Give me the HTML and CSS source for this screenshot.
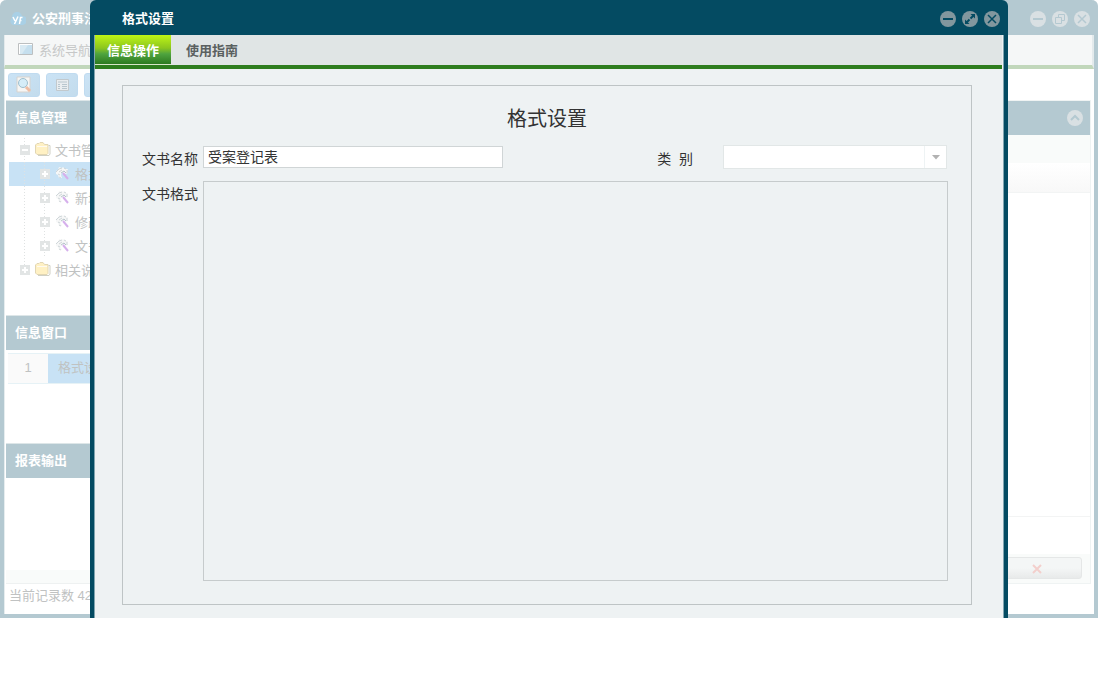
FILE: index.html
```html
<!DOCTYPE html>
<html lang="zh-CN">
<head>
<meta charset="utf-8">
<title>格式设置</title>
<link rel="stylesheet" href="styles.css">
</head>
<body>
<svg class="defs" aria-hidden="true">
  <symbol id="folder" viewBox="0 0 16 14"><path d="M.5 11V3L2 1.500h2L5 .500h3L9.500 2.500H13v9L12 12.500H2z" fill="#fff1c4" stroke="#e2d6b4"/><path d="M2 4.500h10" stroke="#fffaf0"/><path d="M13.500 3.500h1.500v8.500l-1 1.500H3" fill="none" stroke="#cfd0c4"/></symbol>
  <symbol id="tool" viewBox="0 0 16 14"><path d="M1 5l2-1 1-3 3 1 1-1 2 2h3l-1 3 1 1-3 1-3-2-1 3 1 3H4l-1-3-2-1z" fill="#f6f7f7"/><path d="M1 6l3-3 3-1M4 6l3-2M3 8l2 1M4 11l2 1M9 2l2 1M12 4v3" fill="none" stroke="#cfd6d9"/><path d="M6 7l3-2 2 2" fill="none" stroke="#b6c4ca"/><path d="M8 7l5 6" stroke="#d6b0ec" stroke-width="2"/></symbol>
  <symbol id="plus" viewBox="0 0 10 10"><path d="M0 0h10v10H0z" fill="#e2e5e5"/><path d="M5 2v6M2 5h6" stroke="#fff" stroke-width="2"/></symbol>
  <symbol id="minus" viewBox="0 0 10 10"><path d="M0 0h10v10H0z" fill="#e2e5e5"/><path d="M2 5h6" stroke="#fff" stroke-width="2"/></symbol>
</svg>
<div class="stage">
  <div class="app">
    <header class="app-title">
      <svg class="logo" width="16" height="14" viewBox="0 0 16 14"><path d="M3 13a4 4 0 0 1-1-7 5 5 0 0 1 10-2 4 4 0 0 1 1 9z" fill="#a9d0e6"/><path d="M3 5l2 4M8 4.500L4.500 12M9.500 12l1-6.500h2M9.500 8.500h2" stroke="#fff" stroke-width="1.500" fill="none"/></svg>
      <span class="app-name">公安刑事法</span>
      <div class="controls">
        <button aria-label="最小化" class="round"><svg viewBox="0 0 16 16"><path d="M3 8h10" stroke-width="2"/></svg></button>
        <button aria-label="还原" class="round"><svg viewBox="0 0 16 16"><path d="M3.500 6.500h6v6h-6zM6.500 6V3.500h6v6H10"/></svg></button>
        <button aria-label="关闭" class="round"><svg viewBox="0 0 16 16"><path d="M4 4l8 8M12 4l-8 8" stroke-width="1.500"/></svg></button>
      </div>
    </header>
    <nav class="app-nav"><a href="#"><svg width="16" height="13" viewBox="0 0 16 13"><path d="M.5.500h14v11H.5z" fill="#fff" stroke="#bcbfc0"/><path d="M2 2h12v9H2z" fill="#c5dfee"/><path d="M2 2h8L4 11H2z" fill="#d9eaf3"/></svg>系统导航</a></nav>
    <div class="app-main">
      <aside class="side">
        <div class="toolbar">
          <button aria-label="查询"><svg width="20" height="18" viewBox="0 0 20 18"><path d="M3 1h13v15H3z" fill="#f7f6f4" stroke="#d6d3cf"/><circle cx="9" cy="7" r="4.500" fill="#d6edf8" stroke="#9fbfce"/><path d="M12 11l4 4" stroke="#eebda4" stroke-width="3"/></svg></button>
          <button aria-label="列表"><svg width="20" height="18" viewBox="0 0 20 18"><path d="M4.500 3.500h12v11h-12z" fill="#e9edf0" stroke="#c2c9cd"/><path d="M6 6h9M6 8.500h2M6 10.500h2M6 12.500h2M10 8.500h5M10 10.500h5M10 12.500h5" stroke="#b8c6ce"/></svg></button>
          <button aria-label="更多"></button>
        </div>
        <section>
          <h2>信息管理</h2>
          <ul class="tree">
            <li><svg class="box"><use href="#minus"/></svg><svg class="ico"><use href="#folder"/></svg><span>文书管</span></li>
            <li class="sub current"><svg class="box"><use href="#plus"/></svg><svg class="ico"><use href="#tool"/></svg><span>格式</span></li>
            <li class="sub"><svg class="box"><use href="#plus"/></svg><svg class="ico"><use href="#tool"/></svg><span>新增</span></li>
            <li class="sub"><svg class="box"><use href="#plus"/></svg><svg class="ico"><use href="#tool"/></svg><span>修改</span></li>
            <li class="sub"><svg class="box"><use href="#plus"/></svg><svg class="ico"><use href="#tool"/></svg><span>文书</span></li>
            <li class="last"><svg class="box"><use href="#plus"/></svg><svg class="ico"><use href="#folder"/></svg><span>相关说</span></li>
          </ul>
        </section>
        <section>
          <h2>信息窗口</h2>
          <div class="windows"><div class="row"><span class="num">1</span><span class="name">格式设</span></div></div>
        </section>
        <section>
          <h2>报表输出</h2>
          <div class="report"></div>
        </section>
        <div class="strip"></div>
        <p class="count">当前记录数 42</p>
      </aside>
      <div class="panel">
        <div class="panel-head"><button class="round" aria-label="收起"><svg viewBox="0 0 16 16"><path d="M4 10l4-4 4 4" stroke-width="2"/></svg></button></div>
        <div class="panel-bar"></div>
        <div class="panel-cols"></div>
        <div class="panel-body"></div>
        <div class="panel-mid"></div>
        <div class="panel-foot"><button class="cancel" aria-label="取消"><svg width="10" height="10" viewBox="0 0 10 10"><path d="M1 1l8 8M9 1L1 9" stroke="#f3cfcc" stroke-width="2"/></svg></button></div>
      </div>
    </div>
  </div>

  <div class="dialog" role="dialog" aria-labelledby="dlg">
    <header class="dlg-title">
      <h1 id="dlg">格式设置</h1>
      <div class="controls">
        <button class="round" aria-label="最小化"><svg viewBox="0 0 16 16"><path d="M3 8h10" stroke-width="2"/></svg></button>
        <button class="round" aria-label="最大化"><svg viewBox="0 0 16 16"><path d="M8.500 7.500l3-3M7.500 8.500l-3 3" stroke-width="2"/><path d="M8.500 3H13v4.500zM3 8.500V13h4.500z" class="solid"/></svg></button>
        <button class="round" aria-label="关闭"><svg viewBox="0 0 16 16"><path d="M4 4l8 8M12 4l-8 8" stroke-width="1.500"/></svg></button>
      </div>
    </header>
    <div class="dlg-frame">
      <div class="tabs" role="tablist">
        <button role="tab" class="tab active" aria-selected="true">信息操作</button>
        <button role="tab" class="tab" aria-selected="false">使用指南</button>
      </div>
      <form class="form">
        <h3>格式设置</h3>
        <div class="fields">
          <label for="docname">文书名称</label>
          <input id="docname" type="text" value="受案登记表">
          <label for="kind" class="kind-label">类&nbsp; 别</label>
          <div class="select"><select id="kind"><option></option></select><svg width="8" height="5" viewBox="0 0 8 5"><path d="M0 0h8L4 4.500z" fill="#b2b2b2"/></svg></div>
        </div>
        <div class="editor">
          <label for="fmt">文书格式</label>
          <textarea id="fmt"></textarea>
        </div>
      </form>
    </div>
  </div>
</div>
</body>
</html>
```

FILE: styles.css
```css
* { box-sizing: border-box; }
body { margin: 0; background: #fff; font: 13px/20px "Liberation Sans", "Noto Sans CJK SC", sans-serif; }
h1, h2, h3, p, ul { margin: 0; padding: 0; font-size: 13px; }
button { padding: 0; border: 0; font: inherit; background: none; }
svg { display: block; flex: none; }
.defs { display: none; }
.stage { position: relative; display: flow-root; }

/* main window */
.app { margin-right: 1px; border: solid #b4c9d1; border-width: 0 4px 4px; border-radius: 6px 6px 0 0; background: #b4c9d1; }
.app-title { display: flex; align-items: center; height: 35px; padding: 2px 4px 0 6px; color: #fff; font-weight: bold; }
.app-name { margin-left: 6px; flex: 1; }
.controls { display: flex; gap: 6px; }
.round { width: 16px; height: 16px; border-radius: 50%; background: #d9e0e3; }
.round svg { width: 16px; height: 16px; fill: none; stroke: #b4c9d1; }
.app-nav { height: 34px; padding: 5px 13px; background: #f5f7f7; border: solid #e3eaec; border-width: 0 2px 4px 1px; border-bottom-color: #c1d7bb; }
.app-nav a { display: flex; align-items: flex-start; gap: 5px; color: #c6c8c8; line-height: 22px; text-decoration: none; }
.app-nav svg { margin-top: 3px; }
.app-main { display: flex; padding: 0 3px 0 1px; background: #fff; border-left: 1px solid #e6edef; }
.side { width: 220px; color: #c0c2c2; }
.toolbar { display: flex; gap: 6px; height: 31px; padding: 4px 2px 3px; }
.toolbar button { display: grid; place-items: center; width: 32px; height: 24px; border: 1px solid #c0dbf0; border-radius: 3px; background: linear-gradient(135deg, #cbe3f5, #c3dced); }
.side h2 { height: 35px; padding: 0 9px; line-height: 34px; color: #fff; background: #b4c9d1; border-top: 1px solid #dde6e8; }
.tree { list-style: none; height: 180px; padding: 3px 3px 0; }
.tree li { display: flex; align-items: center; height: 24px; padding-left: 11px; background: repeating-linear-gradient(#dfe2e2 0 1px, transparent 1px 3px) 15px 0 / 1px 100% no-repeat; }
.tree li.sub { padding-left: 31px; background: repeating-linear-gradient(#dfe2e2 0 1px, transparent 1px 3px) 15px 0 / 1px 100% no-repeat, repeating-linear-gradient(#dfe2e2 0 1px, transparent 1px 3px) 35px 0 / 1px 100% no-repeat; }
.tree li.current { background-color: #c8e2f5; }
.tree li.last { background-size: 1px 12px; }
.tree span { padding-top: 2px; }
.box { width: 10px; height: 10px; }
.ico { width: 16px; height: 14px; margin: 0 4px 2px 5px; }
.windows { height: 93px; padding: 3px 2px; }
.row { display: flex; height: 31px; line-height: 28px; border: solid #e6f2f6; border-width: 1px 0; }
.num { width: 40px; text-align: center; background: #fafafa; }
.name { flex: 1; padding-left: 10px; background: #c8e2f5; }
.report { height: 92px; }
.strip { height: 14px; background: #f9fbfa; border-bottom: 1px solid #eef1f1; }
.count { height: 30px; padding-left: 3px; line-height: 24px; }
.panel { flex: 1; margin: 31px 0 30px; display: flex; flex-direction: column; border: 1px solid #eff3f3; background: #fff; }
.panel-head { height: 34px; padding: 9px 7px; background: #b4c9d1; display: flex; justify-content: flex-end; }
.panel-bar { height: 28px; background: #f9fbfa; }
.panel-cols { height: 30px; border-bottom: 1px solid #f2f4f4; background: linear-gradient(#fff, #f8f8f8); }
.panel-body { flex: 1; border-bottom: 1px solid #f3f4f4; }
.panel-mid { height: 37px; }
.panel-foot { height: 29px; padding: 3px 8px; background: #f9fbfa; display: flex; justify-content: flex-end; }
.cancel { width: 90px; height: 22px; padding-top: 2px; display: grid; place-items: center; border: 1px solid #e5e7e7; border-radius: 3px; background: linear-gradient(#f4f6f6 50%, #e8eaea); }

/* dialog */
.dialog { position: absolute; top: 0; bottom: 0; left: 90px; right: 91px; display: flex; flex-direction: column; background: #044b62; border-radius: 6px 6px 0 0; }
.dlg-title { display: flex; align-items: center; justify-content: space-between; height: 35px; flex: none; padding: 2px 8px 0 32px; color: #fff; }
.dlg-title .round { background: #82979e; }
.dlg-title .round svg { stroke: #044b62; }
.dlg-title .round .solid { fill: #044b62; stroke: none; }
.dlg-frame { flex: 1; display: flex; flex-direction: column; margin: 0 4px; border: solid #81a5b0; border-width: 0 1px; background: #eef2f3; }
.tabs { display: flex; height: 34px; margin-right: 1px; background: #e0e5e5; border-bottom: 4px solid #2e7d1e; }
.tab { padding: 2px 14px 0 15px; font-weight: bold; color: #5a6060; }
.tab.active { padding: 2px 12px 0; color: #fff; background: linear-gradient(#bff516, #8cc61e 45%, #4fa43f 65%, #2c7a20); border-bottom: 1px solid #d8e6c8; }
.form { flex: 1; display: flex; flex-direction: column; margin: 16px 31px 13px 27px; padding: 21px 23px 23px 19px; border: 1px solid #bec4c5; color: #333; font-size: 14px; }
.form h3 { padding-left: 4px; text-align: center; font-size: 20px; font-weight: normal; line-height: 24px; }
.fields { display: flex; align-items: center; gap: 5px; height: 24px; margin-top: 14px; }
.fields label { padding-top: 3px; }
.fields input { width: 300px; height: 22px; padding: 0 4px 2px; border: 1px solid #d0d5d6; border-radius: 0; font: inherit; color: #333; background: #fff; }
.fields .kind-label { margin-left: auto; margin-right: 25px; }
.select { display: grid; align-items: center; justify-items: end; width: 224px; height: 24px; margin-right: 1px; border: 1px solid #e2e7e7; background: #fff; }
.select > * { grid-area: 1 / 1; }
.select select { width: 100%; height: 22px; border: 0; appearance: none; background: linear-gradient(#eef3f4, #eef3f4) right 21px top / 1px 100% no-repeat #fff; }
.select svg { margin-right: 6px; pointer-events: none; }
.editor { flex: 1; display: flex; gap: 5px; margin-top: 12px; }
.editor label { padding-top: 3px; }
.editor textarea { flex: 1; min-width: 0; resize: none; border: 1px solid #c6cbcc; background: transparent; font: inherit; }
```
